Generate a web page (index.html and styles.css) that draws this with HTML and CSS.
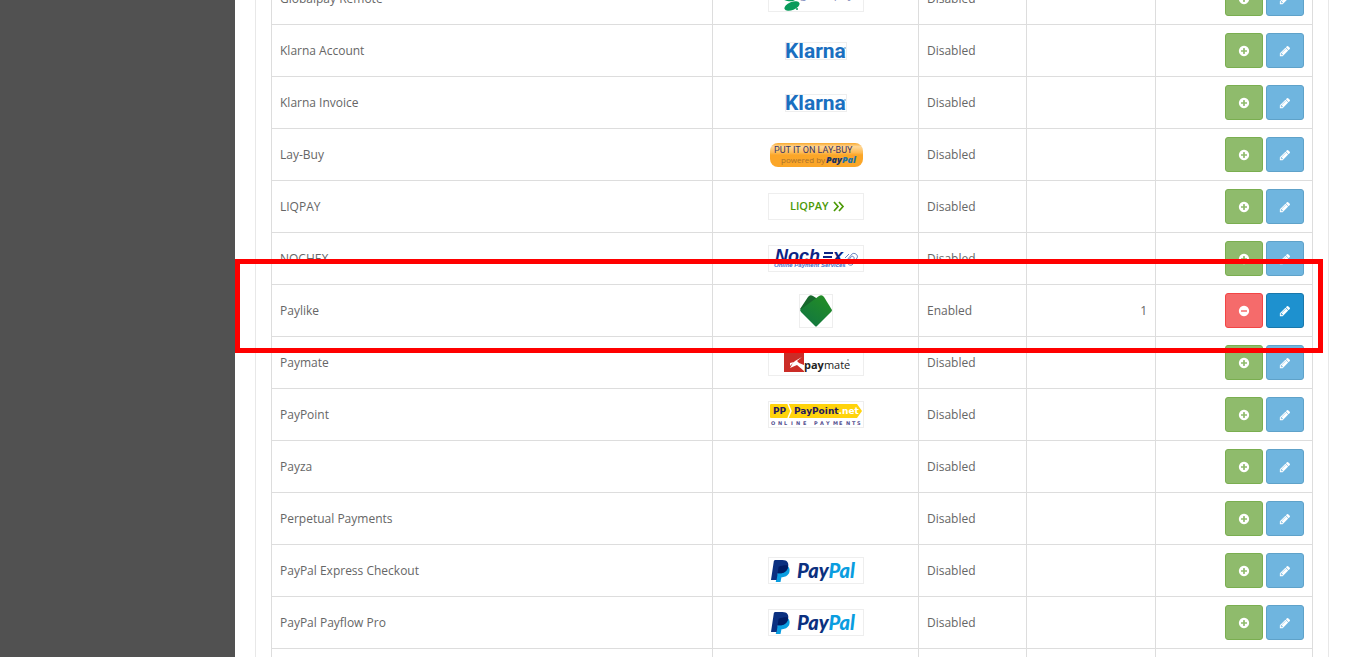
FILE: index.html
```html
<!DOCTYPE html>
<html lang="en">
<head>
<meta charset="utf-8">
<title>Payments</title>
<link rel="stylesheet" href="styles.css">
</head>
<body>
<svg class="sprite" aria-hidden="true">
  <symbol id="plus" viewBox="0 0 1792 1792"><path d="M1344 960v-128q0-26-19-45t-45-19h-256v-256q0-26-19-45t-45-19h-128q-26 0-45 19t-19 45v256h-256q-26 0-45 19t-19 45v128q0 26 19 45t45 19h256v256q0 26 19 45t45 19h128q26 0 45-19t19-45v-256h256q26 0 45-19t19-45zm320-64q0 209-103 385.500t-279.500 279.500-385.500 103-385.500-103-279.500-279.500-103-385.500 103-385.500 279.500-279.500 385.500-103 385.500 103 279.500 279.500 103 385.500z"/></symbol>
  <symbol id="minus" viewBox="0 0 1792 1792"><path d="M1344 960v-128q0-26-19-45t-45-19h-768q-26 0-45 19t-19 45v128q0 26 19 45t45 19h768q26 0 45-19t19-45zm320-64q0 209-103 385.500t-279.500 279.500-385.500 103-385.500-103-279.500-279.500-103-385.500 103-385.500 279.500-279.500 385.500-103 385.500 103 279.500 279.500 103 385.500z"/></symbol>
  <symbol id="pencil" viewBox="0 0 1792 1792"><path d="M491 1536l91-91-235-235-91 91v107h128v128h107zm523-928q0-22-22-22-10 0-17 7l-542 542q-7 7-7 17 0 22 22 22 10 0 17-7l542-542q7-7 7-17zm-54-192l416 416-832 832h-416v-416zm683 96q0 53-37 90l-166 166-416-416 166-165q36-38 90-38 53 0 91 38l235 234q37 39 37 91z"/></symbol>
  <symbol id="paypal-mark" viewBox="0 0 20 24">
    <path fill="#0a9de0" d="M8 8l9-1c3 2 3 5 2 8-2 3-4 4-7 4h-1l-1 5H5z"/>
    <path fill="#0b3080" d="M4 1h8c5 0 7 3 6 7-1 5-5 7-9 7H7l-1 7H0L3 2z"/>
    <path fill="#001c64" d="M8 8c4-1 7-2 10-1 0 5-4 8-8 8H7z"/>
  </symbol>
</svg>
<div class="layout">
  <aside class="sidebar"></aside>
  <main class="content">
    <div class="panel">
      <table class="payments">
        <colgroup><col><col class="col-logo"><col class="col-status"><col class="col-order"><col class="col-action"></colgroup>
        <tbody>
          <tr>
            <td>Globalpay Remote</td>
            <td class="logo"><svg class="thumb" viewBox="0 0 94 25" role="img" aria-label="Globalpay"><g fill="#0a9b5b"><ellipse cx="23" cy="20" rx="8" ry="4" transform="rotate(-22 23 20)"/><ellipse cx="19" cy="11" rx="8" ry="4" transform="rotate(12 19 11)"/><circle cx="28" cy="23" r="1"/></g><text x="31" y="12" class="t-globalpay">globalpay</text></svg></td>
            <td>Disabled</td><td></td>
            <td class="actions"><button class="btn install" aria-label="Install"><svg><use href="#plus"/></svg></button><button class="btn edit" disabled aria-label="Edit"><svg><use href="#pencil"/></svg></button></td>
          </tr>
          <tr>
            <td>Klarna Account</td>
            <td class="logo"><svg class="thumb klarna" viewBox="0 0 60 16"><text x="-1" y="15" class="t-klarna">Klarna</text><circle cx="59" cy="5" r="1" fill="#8cb6dd"/></svg></td>
            <td>Disabled</td><td></td>
            <td class="actions"><button class="btn install" aria-label="Install"><svg><use href="#plus"/></svg></button><button class="btn edit" disabled aria-label="Edit"><svg><use href="#pencil"/></svg></button></td>
          </tr>
          <tr>
            <td>Klarna Invoice</td>
            <td class="logo"><svg class="thumb klarna" viewBox="0 0 60 16"><text x="-1" y="15" class="t-klarna">Klarna</text><circle cx="59" cy="5" r="1" fill="#8cb6dd"/></svg></td>
            <td>Disabled</td><td></td>
            <td class="actions"><button class="btn install" aria-label="Install"><svg><use href="#plus"/></svg></button><button class="btn edit" disabled aria-label="Edit"><svg><use href="#pencil"/></svg></button></td>
          </tr>
          <tr>
            <td>Lay-Buy</td>
            <td class="logo"><svg class="thumb plain" viewBox="0 0 94 25"><defs><linearGradient id="lay" x2="0" y2="1"><stop offset="0" stop-color="#f9a92e"/><stop offset=".15" stop-color="#ffd796"/><stop offset=".4" stop-color="#fdbb54"/><stop offset=".5" stop-color="#fba628"/><stop offset="1" stop-color="#fba628"/></linearGradient></defs><rect x="1" y="1" width="93" height="24" rx="8" fill="url(#lay)"/><text x="5" y="11" class="t-lay">PUT IT ON LAY-BUY</text><text x="12" y="21" class="t-powered">powered by</text><text x="57" y="21" class="t-laypal">Pay<tspan fill="#2273a8">Pal</tspan></text></svg></td>
            <td>Disabled</td><td></td>
            <td class="actions"><button class="btn install" aria-label="Install"><svg><use href="#plus"/></svg></button><button class="btn edit" disabled aria-label="Edit"><svg><use href="#pencil"/></svg></button></td>
          </tr>
          <tr>
            <td>LIQPAY</td>
            <td class="logo"><svg class="thumb" viewBox="0 0 94 25"><text x="21" y="16" class="t-liqpay">LIQPAY</text><path d="M65 8l4 4.500-4 4.500M70 8l4 4.500-4 4.500" fill="none" stroke="#4c9a06" stroke-width="1.700"/></svg></td>
            <td>Disabled</td><td></td>
            <td class="actions"><button class="btn install" aria-label="Install"><svg><use href="#plus"/></svg></button><button class="btn edit" disabled aria-label="Edit"><svg><use href="#pencil"/></svg></button></td>
          </tr>
          <tr>
            <td>NOCHEX</td>
            <td class="logo"><svg class="thumb" viewBox="0 0 94 25"><text y="16" class="t-nochex"><tspan x="6">Noch</tspan><tspan x="64">x</tspan></text><path d="M55 7h9M54 11h9M53 15h9" stroke="#0d2484" stroke-width="2"/><text x="5" y="21" class="t-services">Online Payment Services</text><path d="M78 14l5-6c2-2 7 1 5 4l-4 6c-2 3-7 0-5-3l3-4c1-2 4 0 3 2l-2 3M76 12l4-4" fill="none" stroke="#6b86c0"/></svg></td>
            <td>Disabled</td><td></td>
            <td class="actions"><button class="btn install" aria-label="Install"><svg><use href="#plus"/></svg></button><button class="btn edit" disabled aria-label="Edit"><svg><use href="#pencil"/></svg></button></td>
          </tr>
          <tr>
            <td>Paylike</td>
            <td class="logo"><svg class="thumb paylike" viewBox="0 0 32 32" role="img" aria-label="Paylike"><defs><linearGradient id="like" x1="1" y1="0" x2="0.300" y2="1"><stop offset="0" stop-color="#259022"/><stop offset="1" stop-color="#127740"/></linearGradient></defs><path d="M0 14L8 2q2-3 5-1l8 5-20 9z" fill="#17682c"/><path d="M0 15L19 1q3-2 5 1l8 13q0 1-1 2L17 31q-1 1-2 0L1 17z" fill="url(#like)"/></svg></td>
            <td>Enabled</td><td class="order">1</td>
            <td class="actions"><button class="btn uninstall" aria-label="Uninstall"><svg><use href="#minus"/></svg></button><button class="btn edit" aria-label="Edit"><svg><use href="#pencil"/></svg></button></td>
          </tr>
          <tr>
            <td>Paymate</td>
            <td class="logo"><svg class="thumb" viewBox="0 0 94 25"><path d="M15 1h20v21H15z" fill="#cb2c27"/><path d="M33 7l-7 4-2 2-3 5 7-3 7 6v-6l-5-2-2-2zM21 13l4-1-4 4z" fill="#fff"/><text x="35" y="19" class="t-paymate"><tspan class="bold">pay</tspan>mate</text><circle cx="79" cy="10" r="1" fill="#aaa"/></svg></td>
            <td>Disabled</td><td></td>
            <td class="actions"><button class="btn install" aria-label="Install"><svg><use href="#plus"/></svg></button><button class="btn edit" disabled aria-label="Edit"><svg><use href="#pencil"/></svg></button></td>
          </tr>
          <tr>
            <td>PayPoint</td>
            <td class="logo"><svg class="thumb" viewBox="0 0 94 25"><path d="M2 2h86l5 7-5 7H2q-1 0-1-1V3q0-1 1-1z" fill="#ffd30b"/><path d="M19 2l3 7-3 7" fill="none" stroke="#fff" stroke-width="1.500"/><text x="4" y="12" class="t-paypoint">PP</text><text x="25" y="12" class="t-paypoint">PayPoint<tspan fill="#fff">.net</tspan></text><text y="23" class="t-online" x="2 9 15 22 27 34 45 51 57 64 70 77 83 88">ONLINEPAYMENTS</text></svg></td>
            <td>Disabled</td><td></td>
            <td class="actions"><button class="btn install" aria-label="Install"><svg><use href="#plus"/></svg></button><button class="btn edit" disabled aria-label="Edit"><svg><use href="#pencil"/></svg></button></td>
          </tr>
          <tr>
            <td>Payza</td><td></td><td>Disabled</td><td></td>
            <td class="actions"><button class="btn install" aria-label="Install"><svg><use href="#plus"/></svg></button><button class="btn edit" disabled aria-label="Edit"><svg><use href="#pencil"/></svg></button></td>
          </tr>
          <tr>
            <td>Perpetual Payments</td><td></td><td>Disabled</td><td></td>
            <td class="actions"><button class="btn install" aria-label="Install"><svg><use href="#plus"/></svg></button><button class="btn edit" disabled aria-label="Edit"><svg><use href="#pencil"/></svg></button></td>
          </tr>
          <tr>
            <td>PayPal Express Checkout</td>
            <td class="logo"><svg class="thumb" viewBox="0 0 94 25"><use href="#paypal-mark" x="2" y="1" width="19" height="23"/><text x="28" y="20" class="t-paypal">Pay<tspan fill="#0a9de0">Pal</tspan></text></svg></td>
            <td>Disabled</td><td></td>
            <td class="actions"><button class="btn install" aria-label="Install"><svg><use href="#plus"/></svg></button><button class="btn edit" disabled aria-label="Edit"><svg><use href="#pencil"/></svg></button></td>
          </tr>
          <tr>
            <td>PayPal Payflow Pro</td>
            <td class="logo"><svg class="thumb" viewBox="0 0 94 25"><use href="#paypal-mark" x="2" y="1" width="19" height="23"/><text x="28" y="20" class="t-paypal">Pay<tspan fill="#0a9de0">Pal</tspan></text></svg></td>
            <td>Disabled</td><td></td>
            <td class="actions"><button class="btn install" aria-label="Install"><svg><use href="#plus"/></svg></button><button class="btn edit" disabled aria-label="Edit"><svg><use href="#pencil"/></svg></button></td>
          </tr>
          <tr><td></td><td></td><td></td><td></td><td></td></tr>
        </tbody>
      </table>
    </div>
    <div class="highlight"></div>
  </main>
</div>
</body>
</html>
```
FILE: styles.css
```css
* { box-sizing: border-box; }

body {
  margin: 0;
  background: #fff;
  color: #666;
  font: 12px/18px "Open Sans", sans-serif;
}

.sprite { position: absolute; width: 0; height: 0; }

.layout {
  display: flex;
  height: 100vh;
  overflow: hidden;
}

.sidebar { flex: 0 0 235px; background: #515151; }

.content {
  position: relative;
  flex: 1;
  min-width: 0;
  padding: 0 20px;
}

/* The list is scrolled part-way into its first row. */
.panel {
  margin-top: -28px;
  padding: 0 15px;
  border: solid #e8e8e8;
  border-width: 0 1px;
}

.payments {
  width: 100%;
  table-layout: fixed;
  border-collapse: collapse;
}

.col-logo { width: 206px; }
.col-status { width: 108px; }
.col-order { width: 129px; }
.col-action { width: 157px; }

td {
  height: 52px;
  padding: 8px;
  border: 1px solid #ddd;
  vertical-align: middle;
}

.logo { padding: 0; text-align: center; }
.order { text-align: right; }
.actions { text-align: right; font-size: 0; }

.thumb {
  display: inline-block;
  width: 96px;
  height: 27px;
  border: 1px solid #eee;
  vertical-align: middle;
}
.klarna { width: 62px; height: 18px; }
.paylike { width: 34px; height: 34px; }
.plain { border-color: transparent; }

.btn {
  display: inline-flex;
  align-items: center;
  justify-content: center;
  width: 38px;
  height: 35px;
  margin-left: 3px;
  padding: 0;
  border: 1px solid;
  border-radius: 3px;
  color: #fff;
  vertical-align: middle;
}
.btn svg { width: 12px; height: 12px; fill: currentColor; }

.install { background: #8fbb6c; border-color: #7aae50; }
.uninstall { background: #f56b6b; border-color: #f24545; }
.edit { background: #1e91cf; border-color: #1978ab; }
.edit:disabled { background: #6fb5df; border-color: #5fa2c9; }

.highlight {
  position: absolute;
  top: 259px;
  left: 0;
  right: 26px;
  height: 94px;
  border: 5px solid #f00;
}

.bold { font-weight: 700; }
.t-globalpay { font: 12px "Open Sans", sans-serif; fill: #8b93c0; }
.t-klarna { font: 700 21px Roboto, sans-serif; fill: #1a6fc0; }
.t-lay { font: 9px Roboto, sans-serif; fill: #3c3566; }
.t-powered { font: 8px "Open Sans", sans-serif; fill: #a8712d; }
.t-laypal { font: italic 800 9px "Open Sans", sans-serif; fill: #1b3360; }
.t-liqpay { font: 600 11px "Open Sans", sans-serif; fill: #4c9a06; }
.t-nochex { font: italic 700 18px "Liberation Sans", sans-serif; fill: #0d2484; }
.t-services { font: italic 700 6px "Liberation Sans", sans-serif; fill: #3f70c8; }
.t-paymate { font: 11px "Open Sans", sans-serif; fill: #222; }
.t-paypoint { font: 700 9px "DejaVu Sans", sans-serif; fill: #241a5c; }
.t-online { font: 700 5px "DejaVu Sans", sans-serif; fill: #55508f; }
.t-paypal { font: italic 900 20px Lato, sans-serif; fill: #0b3080; }
```
